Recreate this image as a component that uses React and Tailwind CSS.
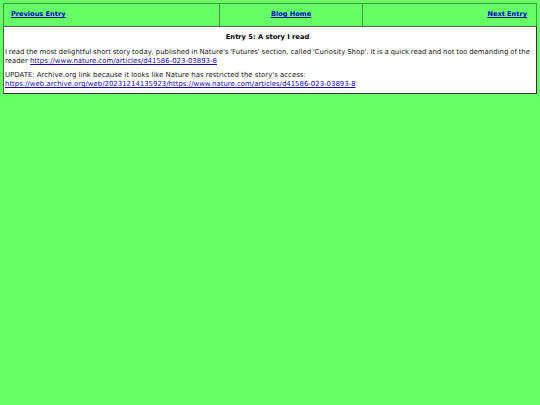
export default function App() {
  return (
    <div className="min-h-[405px] w-[540px] bg-[#66ff66] p-[3px]" style={{ fontFamily: '"DejaVu Sans", Verdana, sans-serif' }}>
      <div className="grid grid-cols-[216px_143px_1fr] h-[23px] text-[6.6px] font-bold border border-b-0 border-[#3f9f3f]">
        <div className="flex items-center pl-[7px] border-r border-[#3f9f3f]">
          <a href="#" className="text-[#0000cc] underline">Previous Entry</a>
        </div>
        <div className="flex items-center justify-center border-r border-[#3f9f3f]">
          <a href="#" className="text-[#0000cc] underline">Blog Home</a>
        </div>
        <div className="flex items-center justify-end pr-[9px]">
          <a href="#" className="text-[#0000cc] underline">Next Entry</a>
        </div>
      </div>
      <div className="bg-white border border-[#4a6a4a] border-r-[#333] border-b-[#333] pl-[1px] pr-[6px] pt-[6px] pb-[4px] text-[6.94px] leading-[9px] text-[#222]">
        <div className="text-center font-bold text-[6.7px] text-black mb-[6px]">Entry 5: A story I read</div>
        <p className="text-justify [word-spacing:-0.9px]">I read the most delightful short story today, published in Nature's 'Futures' section, called 'Curiosity Shop'. It is a quick read and not too demanding of the <span className="[word-spacing:0px]">reader </span><a href="#" className="text-[#1a0dab] underline [word-spacing:0px]">https://www.nature.com/articles/d41586-023-03893-8</a></p>
        <p className="mt-[5px]">UPDATE: Archive.org link because it looks like Nature has restricted the story's access:<br /><a href="#" className="text-[#1a0dab] underline">https://web.archive.org/web/20231214135923/https://www.nature.com/articles/d41586-023-03893-8</a></p>
      </div>
    </div>
  );
}
